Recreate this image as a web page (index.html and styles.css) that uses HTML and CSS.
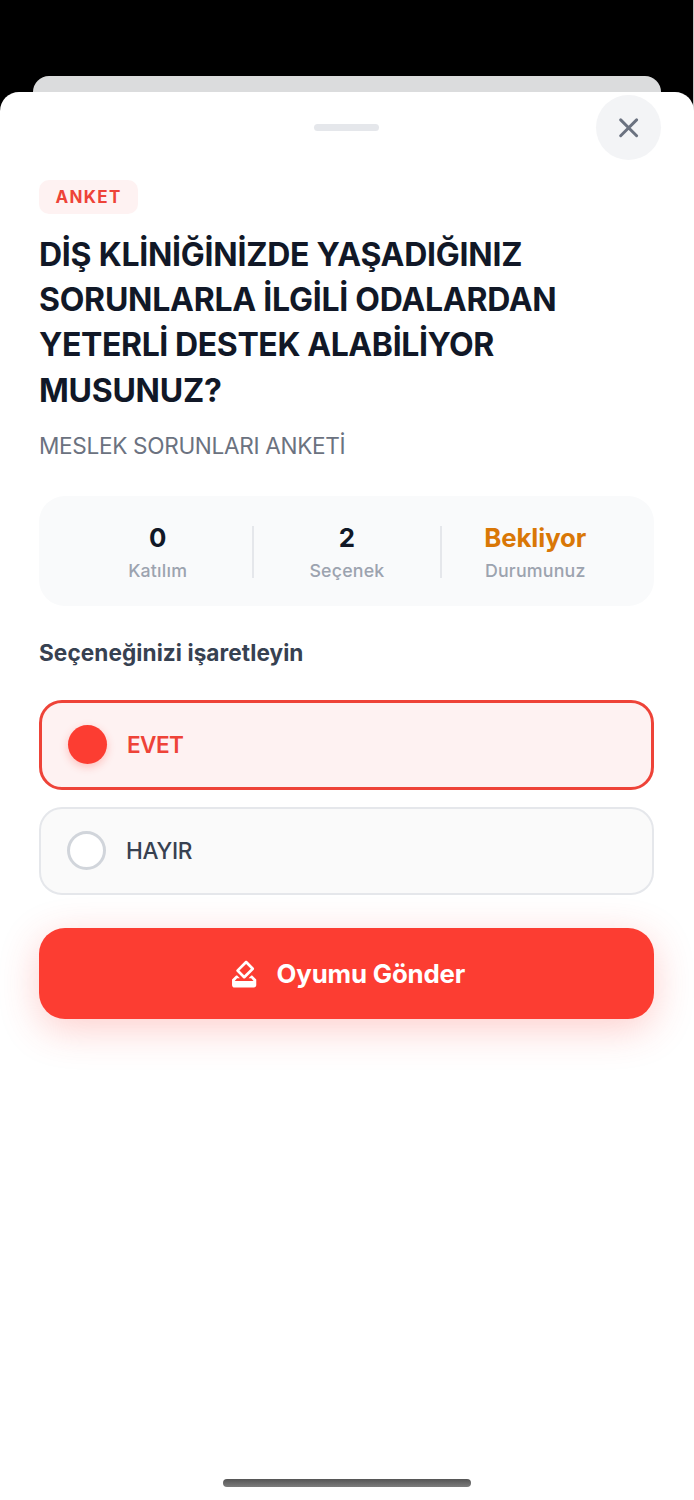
FILE: index.html
```html
<!DOCTYPE html>
<html lang="tr">
<head>
<meta charset="utf-8">
<title>Anket</title>
<link rel="stylesheet" href="styles.css">
</head>
<body>
<div class="screen">
  <div class="backdrop"><div class="back-sheet"></div></div>
  <main class="sheet">
    <header class="sheet-header">
      <span class="handle"></span>
      <button class="close" aria-label="Kapat">
        <svg width="20" height="20" viewBox="0 0 20 20" fill="none" stroke="#6b7280" stroke-width="2.9" stroke-linecap="round"><path d="M1.7 1.9 17.6 17.8M17.6 1.9 1.7 17.8"/></svg>
      </button>
    </header>
    <section class="content">
      <span class="badge">ANKET</span>
      <h1 class="title">DİŞ KLİNİĞİNİZDE YAŞADIĞINIZ<br>SORUNLARLA İLGİLİ ODALARDAN<br><span class="tight">YETERLİ DESTEK ALABİLİYOR</span><br>MUSUNUZ?</h1>
      <p class="subtitle">MESLEK SORUNLARI ANKETİ</p>
      <div class="stats">
        <div class="stat"><b class="value">0</b><span class="label">Katılım</span></div>
        <div class="stat divided"><b class="value">2</b><span class="label">Seçenek</span></div>
        <div class="stat divided"><b class="value pending">Bekliyor</b><span class="label">Durumunuz</span></div>
      </div>
      <h2 class="prompt">Seçeneğinizi işaretleyin</h2>
      <div class="options">
        <div class="option selected"><span class="radio"></span><span>EVET</span></div>
        <div class="option"><span class="radio"></span><span>HAYIR</span></div>
      </div>
      <button class="submit">
        <svg width="32.3" height="32.3" viewBox="0 0 24 24" fill="#fff"><path d="M18 13h-.68l-2 2h1.91L19 17H5l1.78-2h2.05l-2-2H6l-3 3v4c0 1.1.89 2 1.99 2H19c1.1 0 2-.89 2-2v-4l-3-3zm-1-5.05l-4.95 4.95-3.54-3.54 4.95-4.95L17 7.95zm-4.24-5.66L6.39 8.66c-.39.39-.39 1.02 0 1.41l4.95 4.95c.39.39 1.02.39 1.41 0l6.36-6.36c.39-.39.39-1.02 0-1.41L14.16 2.3c-.38-.4-1.01-.4-1.4-.01z"/></svg>
        <span>Oyumu Gönder</span>
      </button>
    </section>
    <div class="home-indicator"></div>
  </main>
</div>
</body>
</html>
```
FILE: styles.css
```css
* { box-sizing: border-box; }
body { margin: 0; background: #fff; font-family: Inter, "Liberation Sans", sans-serif; }
button { border: 0; padding: 0; font: inherit; }
.screen { width: 694px; height: 1500px; overflow: hidden; display: flex; flex-direction: column; background: linear-gradient(90deg, #000 693px, #c4c4c4 693px) top / 100% 140px no-repeat; }
.backdrop { height: 92.4px; padding: 76.4px 33px 0; }
.back-sheet { height: 16px; border-radius: 16px 16px 0 0; background: #dbdcdd; }
.sheet { flex: 1; display: flex; flex-direction: column; background: #fff; border-radius: 19px 19px 0 0; }
.sheet-header { height: 71.6px; padding: 3px 33px 4px 32px; display: grid; grid-template-columns: 65px 1fr 65px; align-items: center; }
.handle { grid-column: 2; justify-self: center; width: 65px; height: 7px; border-radius: 4px; background: #e5e7eb; }
.close { width: 65px; height: 65px; border-radius: 50%; background: #f3f4f6; display: flex; align-items: center; justify-content: center; }
.content { padding: 16px 39px 0; display: flex; flex-direction: column; align-items: stretch; }
.badge { align-self: flex-start; width: 99px; height: 34px; line-height: 35px; padding-left: 16.5px; border-radius: 10px; background: #fef2f2; color: #ee4338; font-size: 17px; font-weight: 700; letter-spacing: 1.3px; }
.title { margin: 18px 0 0; color: #111827; font-size: 32px; line-height: 45.2px; font-weight: 670; letter-spacing: -.25px; white-space: nowrap; }
.tight { letter-spacing: -.4px; }
.subtitle { margin: 16.5px 0 0; color: #6b7280; font-size: 22.6px; line-height: 34px; letter-spacing: -.33px; }
.stats { margin-top: 32.9px; width: 615.4px; height: 110px; padding: 26px 26px 25px 24.5px; border-radius: 26px; background: #f9fafb; display: grid; grid-template-columns: repeat(3, 1fr); align-items: center; }
.stat { height: 52px; display: flex; flex-direction: column; align-items: center; }
.divided { border-left: 2px solid #e5e7eb; }
.value { color: #111827; font-size: 25.8px; line-height: 31px; margin-top: -4px; letter-spacing: -.1px; }
.pending { color: #d97706; }
.label { color: #9ca3af; font-size: 17.8px; line-height: 22px; margin-top: 7px; font-weight: 450; letter-spacing: .2px; }
.prompt { margin: 32.3px 0 0; color: #374151; font-size: 22.6px; line-height: 30px; font-weight: 650; letter-spacing: .07px; }
.options { width: 615.4px; margin-top: 31.3px; display: flex; flex-direction: column; gap: 16.5px; }
.option { height: 88.5px; padding: 0 26px; border: 2px solid #e5e7eb; border-radius: 23px; background: #fafafa; display: flex; align-items: center; gap: 20px; color: #374151; font-size: 22.6px; font-weight: 500; letter-spacing: -.3px; }
.option .radio { width: 39px; height: 39px; border: 3px solid #d1d5db; border-radius: 50%; background: #fff; }
.option.selected { height: 90.3px; border: 3px solid #ee4338; background: #fef2f2; color: #ee4338; font-weight: 600; letter-spacing: -.6px; }
.selected .radio { border: 0; background: #fc3d32; box-shadow: 0 3px 9px rgba(252, 61, 50, .28); }
.submit { width: 615.4px; height: 91px; margin-top: 33.2px; border-radius: 26px; background: #fc3d32; color: #fff; box-shadow: 0 10px 39px rgba(252, 61, 50, .25); display: flex; align-items: center; justify-content: center; gap: 16px; font-size: 25.8px; font-weight: 700; letter-spacing: -.17px; }
.home-indicator { margin: auto auto 13px; width: 248px; height: 8px; border-radius: 4px; background: linear-gradient(#555, #7c7c7c); }
```
